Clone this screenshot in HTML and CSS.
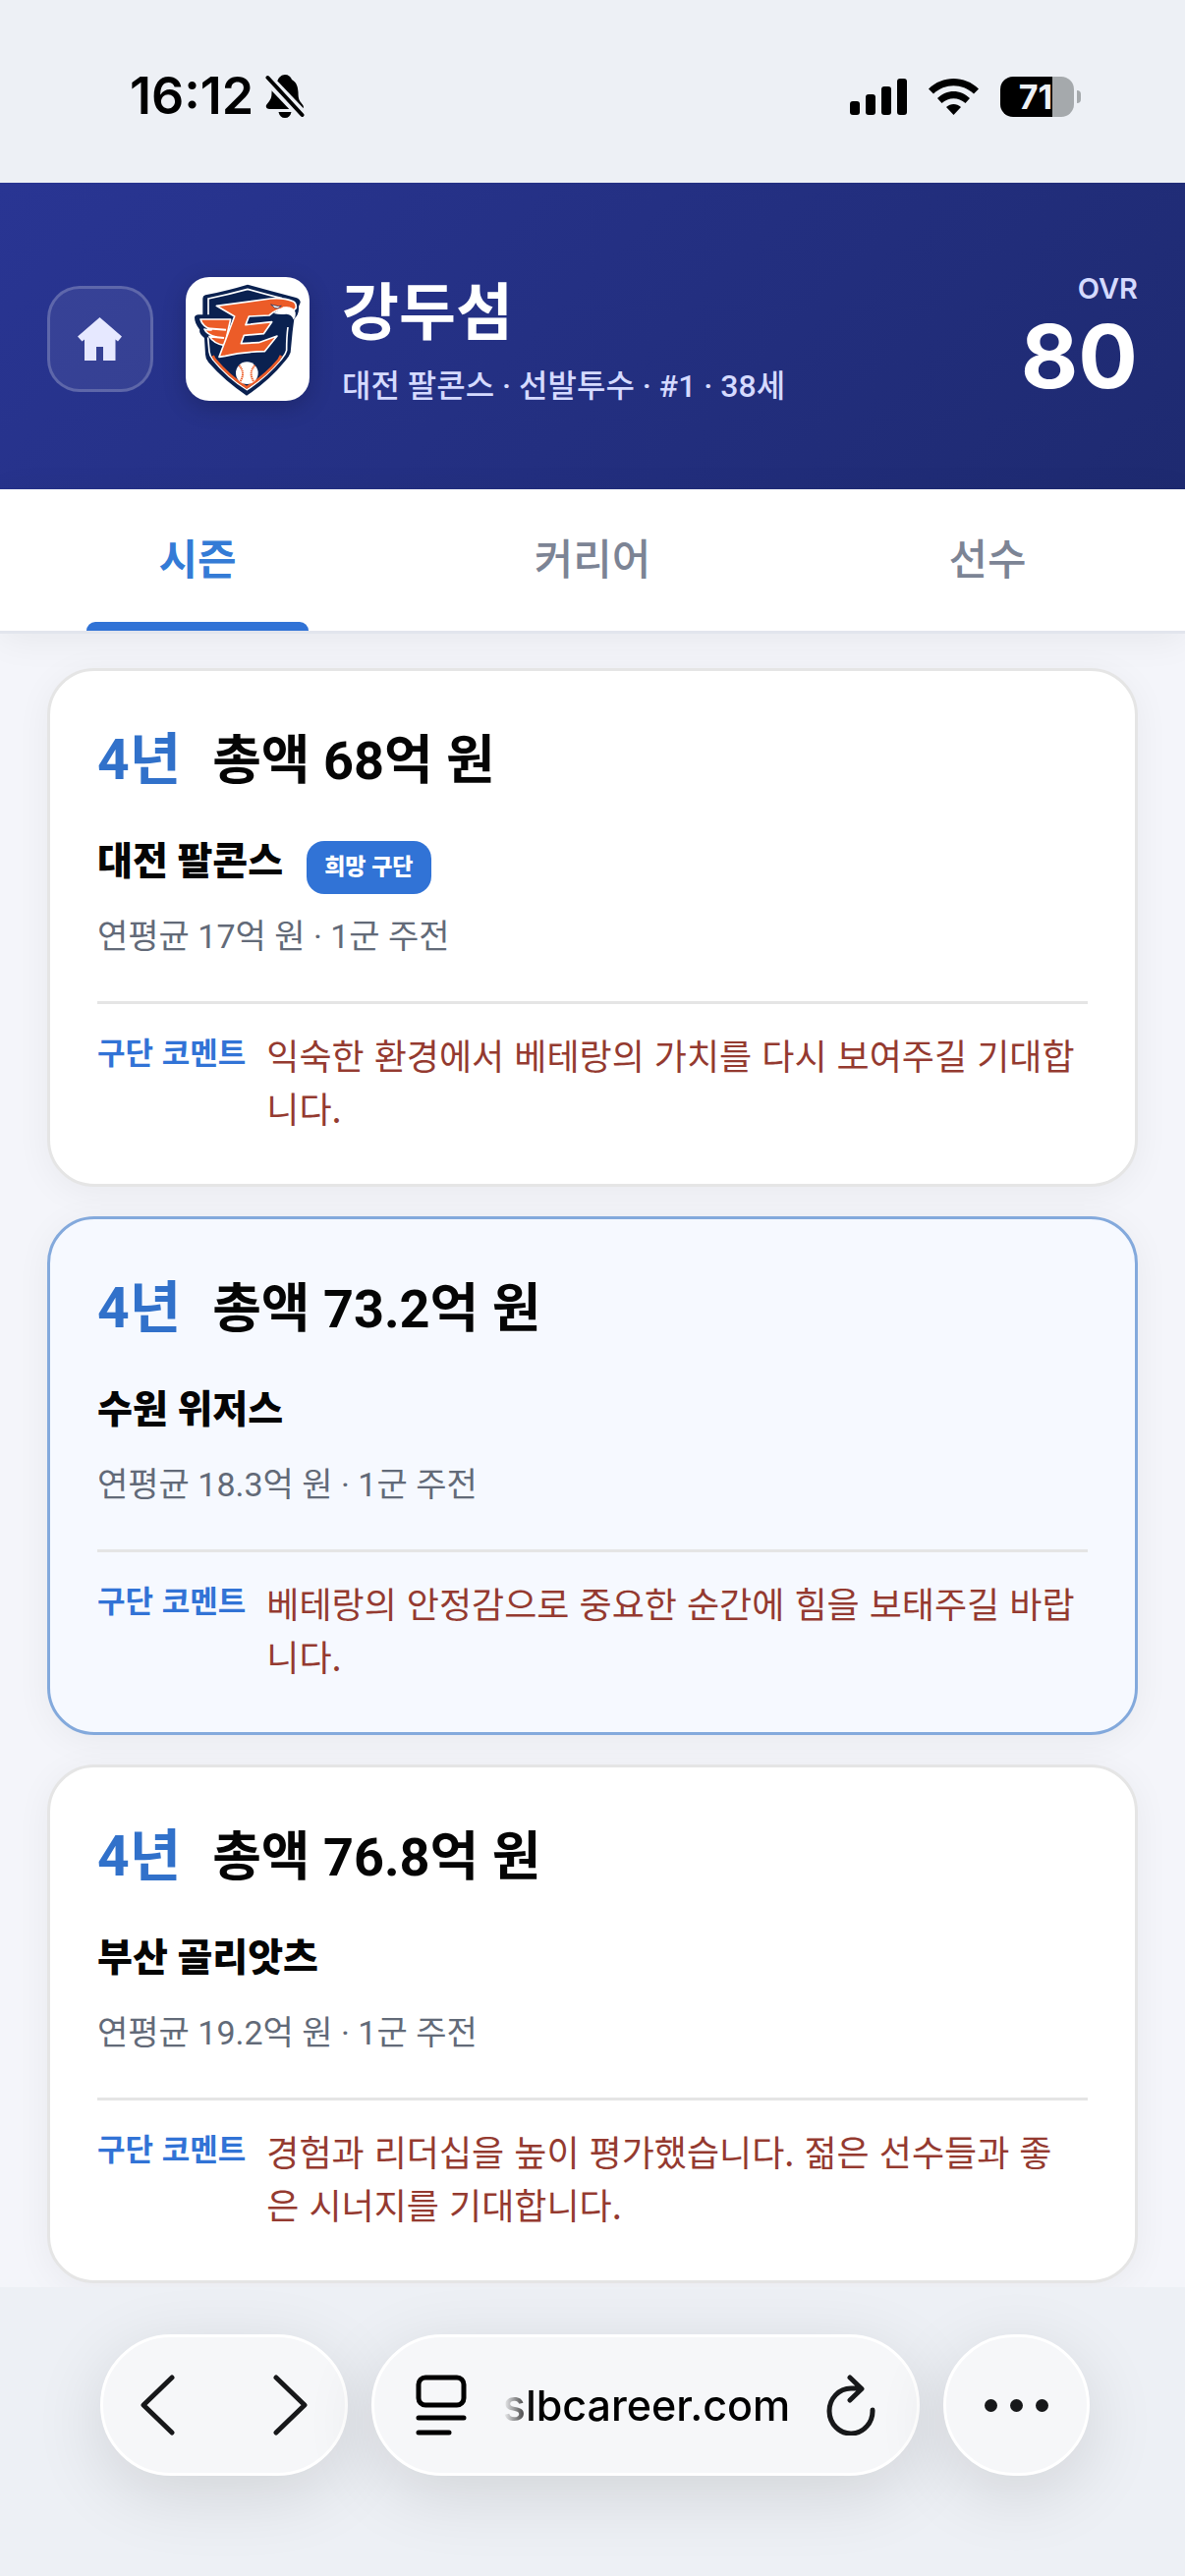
FILE: index.html
```html
<!DOCTYPE html>
<html lang="ko">
<head>
    <meta charset="UTF-8">
    <meta name="viewport" content="width=device-width, initial-scale=1.0">
    <title>강두섬 - 시즌</title>
    <link rel="stylesheet" href="styles.css">
</head>
<body>

<div class="status-bar">
    <div class="status-left">
        <span class="clock">16:12</span>
        <svg class="icon-bell" viewBox="0 0 39 44" aria-hidden="true">
            <path d="M12 6C13 3 16 0 19.500 0s6 2 7 5c5 3 6 7 6.500 13 0 7 1 8 4 12 2 2 2 5-1 5H4c-4 0-5-3-2-6 3-4 4-5 4-11 0-5 2-9 6-12z"/>
            <path d="M13 38h13c-1 4-3 6-6.500 6S14 42 13 38z"/>
            <path class="bell-gap" d="M1 3l37 39"/>
            <path class="bell-slash" d="M2 3l35 38"/>
        </svg>
    </div>
    <div class="status-right">
        <svg class="icon-signal" viewBox="0 0 58 37" aria-hidden="true">
            <rect x="0" y="23" width="10" height="14" rx="3"/>
            <rect x="16" y="16" width="10" height="21" rx="3"/>
            <rect x="32" y="8" width="10" height="29" rx="3"/>
            <rect x="48" y="0" width="10" height="37" rx="3"/>
        </svg>
        <svg class="icon-wifi" viewBox="0 0 51 37" aria-hidden="true">
            <path d="M0 10.500C14-3.500 37-3.500 51 10.500L46 15.500C34.500 4.500 16.500 4.500 5 15.500z"/>
            <path d="M9 20c9.500-9.500 23.500-9.500 33 0l-4.500 5c-7-6.500-17-6.500-24 0z"/>
            <path d="M18 29c4.500-4 10.500-4 15 0l-7.500 8z"/>
        </svg>
        <div class="battery"><span class="battery-body">71</span><span class="battery-cap"></span></div>
    </div>
</div>

<header class="player-header">
    <button type="button" class="home-btn" aria-label="홈">
        <svg viewBox="0 0 46 44" aria-hidden="true">
            <path d="M22.500 0L45 19.500 41 24.500 38.500 22.500V44H26V30h-7v14H7V22.500L4.500 24.500 0 19.500z"/>
        </svg>
    </button>
    <div class="team-logo">
        <svg viewBox="27 37 378 377" aria-hidden="true">
            <!-- shield -->
            <path class="navy" d="M216 60l72 20 76 20q14 5 13 15l-5 12q2 25-14 38l-5 40-6 62q-5 14-16 26-50 62-118 106Q145 353 97 298q-10-12-10-25l-3-50q-18-14-14-25-16-20-16-38 2-8 12-8h13v-50q0-8 8-10 70-14 129-32z"/>
            <path class="keyline" d="M96 152v-49q62-13 120-29 60 17 105 28M339 190q-4 30-4 71-3 12-15 26-48 57-106 94-58-36-104-92-10-12-11-24l-4-44"/>
            <!-- trim under the ball -->
            <path class="trim" d="M110 277l5 10q44 53 98 87 56-34 98-84l7-13"/>
            <!-- wing -->
            <path class="wing" d="M72 166h92l-18 80q-34-6-47-28 15 4 22 2-30-7-37-24 12 4 22 2-28-10-34-32z"/>
            <path class="feather" d="M92 194l58 4M106 219l38 4"/>
            <!-- letter shape and falcon head -->
            <path class="mark" d="M121 125l164-22q40-4 70 8 10 5 9 20l-7 8-22-8-24 5-16 8-13 10-62 3-10 26 80-9-25 36-60 5-9 25 54-3 56-20-38 47q-70 2-120 14l-19 3 47-124z"/>
            <path class="beak" d="M325 128q34-2 37 17 2 14-6 22-5-16-22-17-20 2-38-2l12-8z"/>
            <path class="eye" d="M287 121l12 10q10 6 20-6l-9 1z"/>
            <!-- baseball -->
            <circle class="ball" cx="214" cy="330" r="34"/>
            <path class="stitch" d="M190 307q20 22 4 48M238 307q-20 22-4 48"/>
        </svg>
    </div>
    <div class="player-info">
        <h1>강두섬</h1>
        <p>대전 팔콘스 · 선발투수 · #1 · 38세</p>
    </div>
    <div class="ovr">
        <span class="ovr-label">OVR</span>
        <span class="ovr-value">80</span>
    </div>
</header>

<nav class="tabs">
    <button type="button" class="tab active">시즌</button>
    <button type="button" class="tab">커리어</button>
    <button type="button" class="tab">선수</button>
</nav>

<main class="offers">
    <article class="offer">
        <h2><span class="years">4년</span><span>총액 68억 원</span></h2>
        <div class="team"><h3>대전 팔콘스</h3><span class="badge">희망 구단</span></div>
        <p class="terms">연평균 17억 원 · 1군 주전</p>
        <div class="comment">
            <span class="comment-label">구단 코멘트</span>
            <p>익숙한 환경에서 베테랑의 가치를 다시 보여주길 기대합니다.</p>
        </div>
    </article>

    <article class="offer selected">
        <h2><span class="years">4년</span><span>총액 73.2억 원</span></h2>
        <div class="team"><h3>수원 위저스</h3></div>
        <p class="terms">연평균 18.3억 원 · 1군 주전</p>
        <div class="comment">
            <span class="comment-label">구단 코멘트</span>
            <p>베테랑의 안정감으로 중요한 순간에 힘을 보태주길 바랍니다.</p>
        </div>
    </article>

    <article class="offer">
        <h2><span class="years">4년</span><span>총액 76.8억 원</span></h2>
        <div class="team"><h3>부산 골리앗츠</h3></div>
        <p class="terms">연평균 19.2억 원 · 1군 주전</p>
        <div class="comment">
            <span class="comment-label">구단 코멘트</span>
            <p>경험과 리더십을 높이 평가했습니다. 젊은 선수들과 좋<br>은 시너지를 기대합니다.</p>
        </div>
    </article>
</main>

<footer class="browser-bar">
    <div class="pill nav-pill">
        <button type="button" aria-label="뒤로">
            <svg class="chevron" viewBox="0 0 35 62" aria-hidden="true"><path d="M32 3L3 31l29 28"/></svg>
        </button>
        <button type="button" aria-label="앞으로">
            <svg class="chevron" viewBox="0 0 35 62" aria-hidden="true"><path d="M3 3l29 28L3 59"/></svg>
        </button>
    </div>
    <div class="pill url-pill">
        <button type="button" aria-label="페이지 메뉴">
            <svg class="icon-page" viewBox="0 0 52 62" aria-hidden="true">
                <rect x="3" y="3" width="46" height="28" rx="7"/>
                <path d="M3 44h46M3 59h31"/>
            </svg>
        </button>
        <a class="url" href="#">slbcareer.com</a>
        <button type="button" aria-label="새로고침">
            <svg class="icon-reload" viewBox="0 0 50 62" aria-hidden="true">
                <path d="M47 36A22 23 0 1 1 25 14h10M24 3l12 11.500L24 26"/>
            </svg>
        </button>
    </div>
    <button type="button" class="pill more-pill" aria-label="더 보기">
        <svg class="icon-more" viewBox="0 0 65 13" aria-hidden="true">
            <circle cx="6.500" cy="6.500" r="6.500"/>
            <circle cx="32.500" cy="6.500" r="6.500"/>
            <circle cx="58.500" cy="6.500" r="6.500"/>
        </svg>
    </button>
</footer>

</body>
</html>
```
FILE: styles.css
```css
* {
    box-sizing: border-box;
}

body {
    margin: 0;
    min-height: 100vh;
    display: flex;
    flex-direction: column;
    background-color: #f4f5fa;
    font-family: Roboto, "Noto Sans CJK KR", sans-serif;
    color: #050505;
}

h1, h2, h3, p {
    margin: 0;
}

button {
    padding: 0;
    border: none;
    background: none;
    font-family: inherit;
    color: inherit;
    cursor: pointer;
}

svg {
    display: block;
}

/* status bar */
.status-bar {
    display: flex;
    justify-content: space-between;
    align-items: center;
    height: 186px;
    padding: 10px 106px 0 132px;
    background-color: #edf0f5;
    color: #000;
    font-family: Inter, sans-serif;
}

.status-left, .status-right {
    display: flex;
    align-items: center;
}

.status-left {
    gap: 12px;
}

.status-right {
    gap: 22px;
}

.clock {
    font-size: 52px;
    font-weight: 600;
    line-height: 60px;
}

.icon-bell {
    width: 40px;
    height: 44px;
}

.bell-gap, .bell-slash {
    fill: none;
    stroke: #edf0f5;
    stroke-width: 11;
}

.bell-slash {
    stroke: #000;
    stroke-width: 4;
    stroke-linecap: round;
}

.icon-signal {
    width: 58px;
    height: 37px;
}

.icon-wifi {
    width: 51px;
    height: 37px;
}

.battery {
    display: flex;
    align-items: center;
    gap: 3px;
}

.battery-body {
    width: 75px;
    height: 41px;
    padding-right: 3px;
    border-radius: 13px;
    background: linear-gradient(to right, #000 71%, #a5a9ac 71%);
    color: #edf0f5;
    font-size: 34px;
    font-weight: 700;
    line-height: 41px;
    text-align: center;
}

.battery-cap {
    width: 4px;
    height: 13px;
    border-radius: 0 4px 4px 0;
    background-color: #a5a9ac;
}

/* player header */
.player-header {
    display: flex;
    align-items: center;
    min-height: 312px;
    padding: 6px 48px 0;
    background: linear-gradient(135deg, #293593, #1e2a70);
    color: #fff;
}

.home-btn {
    display: flex;
    justify-content: center;
    align-items: center;
    width: 108px;
    height: 108px;
    border: 3px solid rgba(255, 255, 255, 0.2);
    border-radius: 33px;
    background-color: rgba(255, 255, 255, 0.07);
}

.home-btn svg {
    width: 46px;
    height: 44px;
    fill: #e6e8ff;
}

.team-logo {
    width: 126px;
    height: 126px;
    margin: 0 33px;
    border-radius: 24px;
    background-color: #fff;
    box-shadow: 0 6px 24px rgba(0, 0, 0, 0.2);
}

.navy {
    fill: #0a2150;
}

.keyline {
    fill: none;
    stroke: #fff;
    stroke-width: 5;
}

.trim {
    fill: none;
    stroke: #ec5c28;
    stroke-width: 8;
}

.wing, .mark {
    fill: #ec5c28;
    stroke: #fff;
    stroke-width: 5;
    stroke-linejoin: round;
}

.feather {
    fill: none;
    stroke: #fff;
    stroke-width: 6;
}

.beak {
    fill: #fff;
}

.eye {
    fill: #fff;
    stroke: #0a2150;
    stroke-width: 2;
}

.ball {
    fill: #fff;
}

.stitch {
    fill: none;
    stroke: #ec5c28;
    stroke-width: 6;
    stroke-dasharray: 4 2;
}

.player-info {
    flex: 1;
    padding-top: 8px;
}

.player-info h1 {
    font-size: 63px;
    font-weight: 700;
    line-height: 88px;
}

.player-info p {
    color: #d5daff;
    font-size: 32px;
    font-weight: 500;
    line-height: 60px;
}

.ovr {
    display: flex;
    flex-direction: column;
    align-items: flex-end;
    font-family: Inter, sans-serif;
}

.ovr-label {
    color: #d5daff;
    font-size: 29px;
    font-weight: 600;
    line-height: 36px;
}

.ovr-value {
    font-size: 90px;
    font-weight: 700;
    line-height: 102px;
}

/* tabs */
.tabs {
    display: flex;
    border-bottom: 3px solid #e2e5ed;
    background-color: #fff;
    box-shadow: 0 6px 36px rgba(0, 0, 0, 0.06);
}

.tab {
    position: relative;
    flex: 1;
    height: 144px;
    padding-bottom: 8px;
    color: #7c8495;
    font-size: 43px;
    font-weight: 500;
}

.tab.active {
    color: #347bd6;
    font-weight: 700;
}

.tab.active::after {
    content: "";
    position: absolute;
    left: 22%;
    right: 22%;
    bottom: 0;
    height: 9px;
    border-radius: 9px 9px 0 0;
    background-color: #3173d6;
}

/* contract offers */
.offers {
    flex: 1;
    display: flex;
    flex-direction: column;
    gap: 30px;
    padding: 35px 48px 4px;
}

.offer {
    padding: 51px 48px;
    border: 3px solid #e5e5e5;
    border-radius: 48px;
    background-color: #fff;
    box-shadow: 0 6px 36px rgba(0, 0, 0, 0.05);
}

.offer.selected {
    border-color: #83a9dc;
    background-color: #f6f9ff;
}

.offer h2 {
    display: flex;
    align-items: baseline;
    gap: 32px;
    height: 80px;
    font-size: 54px;
    font-weight: 700;
    line-height: 80px;
}

.offer .years {
    color: #3171ca;
    font-size: 57px;
}

.team {
    display: flex;
    align-items: baseline;
    gap: 24px;
    height: 60px;
    margin-top: 36px;
}

.team h3 {
    font-size: 39px;
    font-weight: 900;
    line-height: 54px;
}

.badge {
    padding: 0 18px;
    border-radius: 18px;
    background-color: #3173d6;
    color: #fff;
    font-size: 23px;
    font-weight: 800;
    line-height: 54px;
}

.terms {
    margin-top: 16px;
    color: #626a78;
    font-size: 34px;
    line-height: 54px;
}

.comment {
    display: flex;
    align-items: flex-start;
    gap: 21px;
    margin-top: 39px;
    padding-top: 24px;
    border-top: 3px solid #e5e5e5;
    font-family: "Noto Sans CJK KR", sans-serif;
}

.comment-label {
    flex-shrink: 0;
    color: #3173d6;
    font-size: 31px;
    font-weight: 700;
    line-height: 48px;
}

.comment p {
    color: #943a30;
    font-size: 36px;
    line-height: 54px;
    word-break: break-all;
}

/* browser toolbar */
.browser-bar {
    display: flex;
    justify-content: center;
    gap: 24px;
    padding: 48px 97px 102px 102px;
    background-color: #edf0f5;
    font-family: Inter, sans-serif;
}

.pill {
    display: flex;
    align-items: center;
    height: 144px;
    border: 3px solid #fff;
    border-radius: 72px;
    background-color: #f6f7f9;
    box-shadow: 0 18px 72px rgba(0, 0, 0, 0.12);
}

.nav-pill {
    justify-content: space-between;
    width: 252px;
    padding: 0 38px;
}

.chevron {
    width: 35px;
    height: 62px;
}

.chevron, .icon-page, .icon-reload {
    fill: none;
    stroke: #17181a;
    stroke-width: 5;
    stroke-linecap: round;
    stroke-linejoin: round;
}

.url-pill {
    flex: 1;
    justify-content: space-between;
    padding: 0 42px;
}

.icon-page {
    width: 52px;
    height: 62px;
    stroke: #000;
}

.icon-reload {
    width: 50px;
    height: 62px;
}

.url {
    color: #000;
    font-size: 43px;
    font-weight: 500;
    line-height: 60px;
    text-decoration: none;
    -webkit-mask-image: linear-gradient(to right, transparent, #000 30px);
    mask-image: linear-gradient(to right, transparent, #000 30px);
}

.more-pill {
    justify-content: center;
    width: 149px;
}

.icon-more {
    width: 65px;
    height: 13px;
    fill: #17181a;
}
```
